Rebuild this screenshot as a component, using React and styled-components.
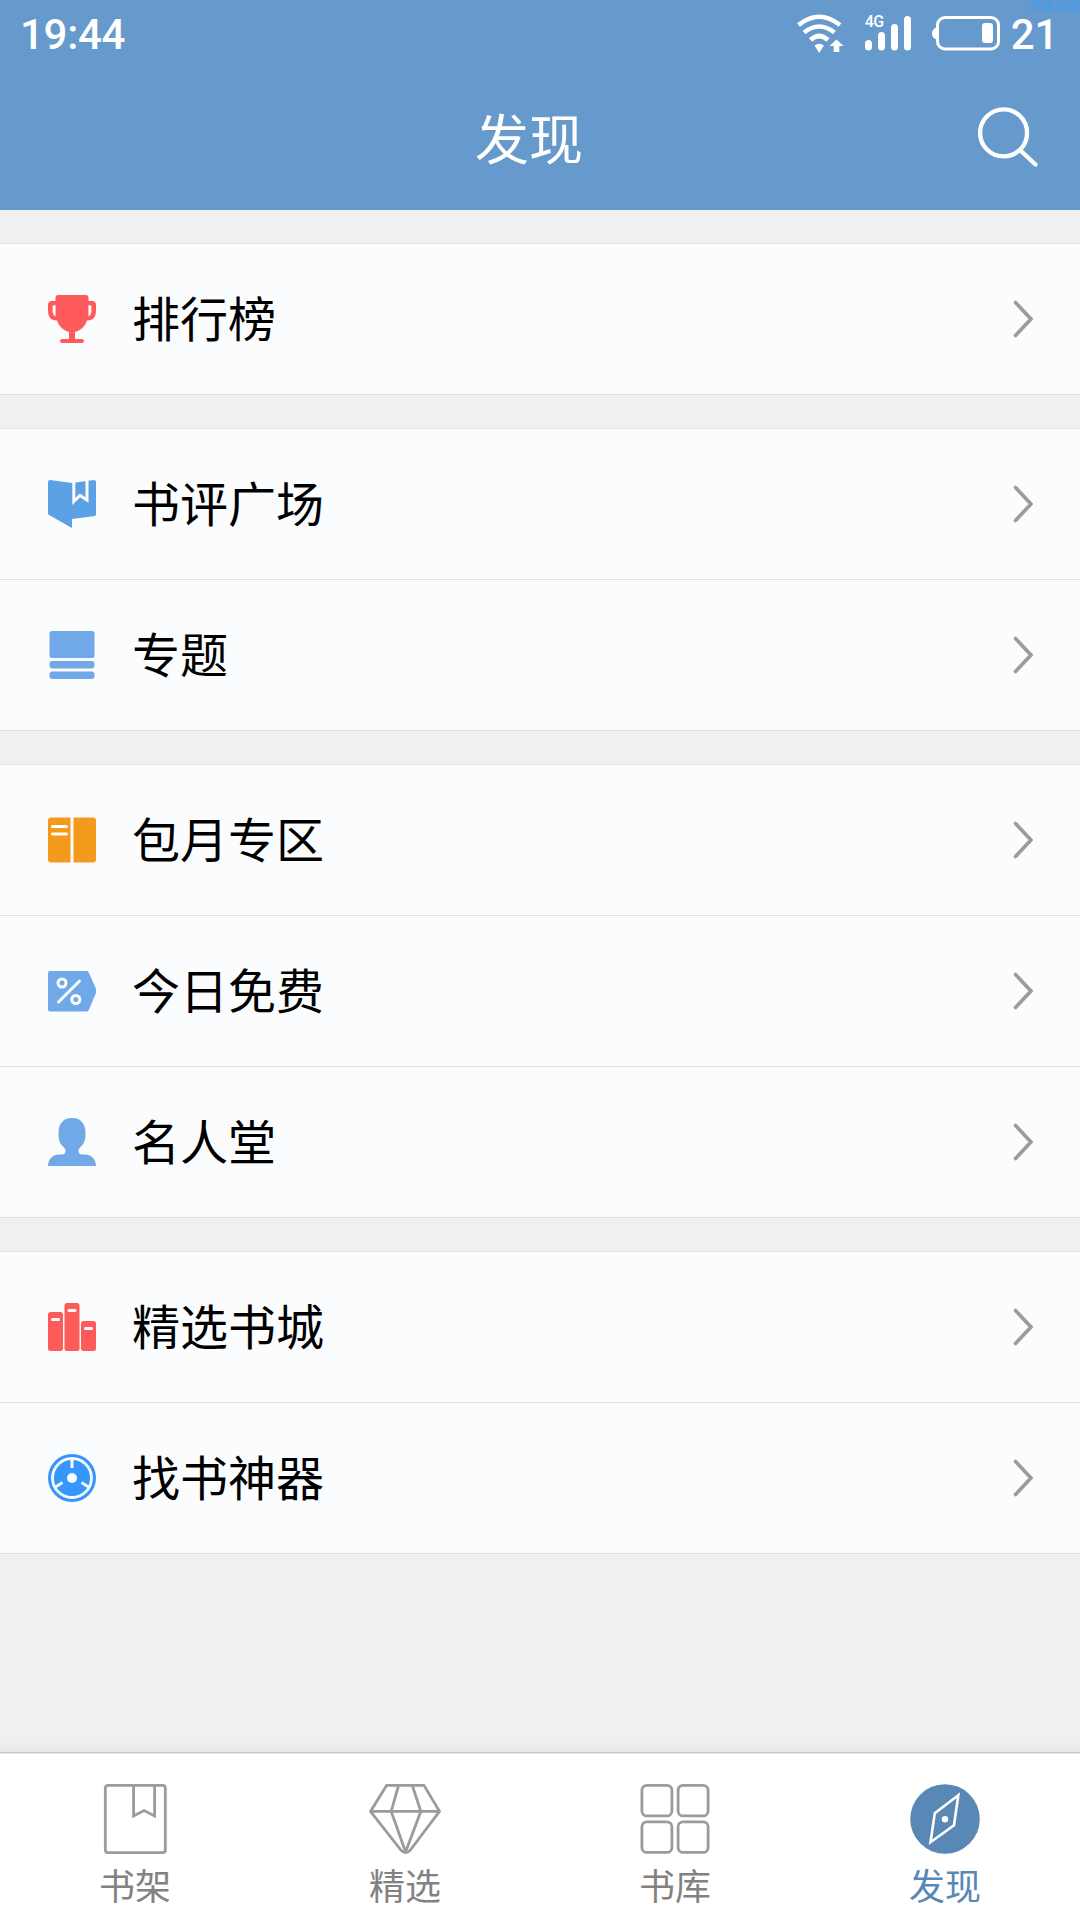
import styled, { createGlobalStyle } from 'styled-components';

const GlobalStyle = createGlobalStyle`
*{
box-sizing:border-box;
}
body{
margin:0;
background-color:#eff0f2;
font-family:Roboto, "Noto Sans CJK SC", sans-serif;
}
`;

const TrophyIcon = () => (
  <svg width='48' height='48' viewBox='0 0 48 48'>
    <path fill='#ff5a5a' d='M10 0h28q2.500 0 2.500 3v3H44q4 0 4 4v6q0 9-8 9.500h-1C37 31 33 35.500 27 37v7h7q2 0 2 2t-2 2H14q-2 0-2-2t2-2h7v-7C15 35.500 11 31 9 25.500H8q-8-.5-8-9.500v-6q0-4 4-4h3.500V3Q7.500 0 10 0z' />
    <path fill='#fbfcfe' d='M7.600 10v11.500Q4.600 20 4.600 16v-4.500q0-1.500 3-1.500zM40.400 10v11.500q3-1.500 3-5.500v-4.500q0-1.500-3-1.500z' />
  </svg>
);

const ReviewIcon = () => (
  <svg width='48' height='48' viewBox='0 0 48 48'>
    <path fill='#5ba1e4' d='M2 0l22 3 22-3q2 0 2 2v33l-1 1-23 3v9L1 35l-1-1V2Q0 0 2 0z' />
    <path fill='none' stroke='#fbfcfe' strokeWidth='3' d='M25.800 0v21.500l6.200-6 7 4.500V0' />
  </svg>
);

const TopicIcon = () => (
  <svg width='48' height='48' viewBox='0 0 48 48' fill='#70a8e8'>
    <rect x='1.500' y='0' width='45' height='27' rx='2.500' />
    <rect x='1.500' y='30' width='45' height='7.500' rx='3' />
    <rect x='1.500' y='40.500' width='45' height='7.500' rx='3' />
  </svg>
);

const MonthlyIcon = () => (
  <svg width='48' height='48' viewBox='0 0 48 48'>
    <path fill='#f39a1c' d='M3 1.500h19.500v45H3q-3 0-3-3v-39q0-3 3-3zM25.500 1.500H45q3 0 3 3v39q0 3-3 3H25.500z' />
    <path stroke='#fff' strokeWidth='3' strokeLinecap='round' d='M4.500 10.500h14M4.500 18h14' />
  </svg>
);

const FreeIcon = () => (
  <svg width='48' height='48' viewBox='0 0 48 48'>
    <path fill='#70a8e8' d='M2 4h37q1 0 2 2l7 16q.6 2 0 4l-7 16.500q-1 2-2 2H2q-2 0-2-2V6q0-2 2-2z' />
    <g fill='none' stroke='#fbfcfe' strokeWidth='3' strokeLinecap='round'>
      <circle cx='14' cy='16' r='4' />
      <circle cx='27.800' cy='32.500' r='4' />
      <path d='M31.500 14L10.500 35' />
    </g>
  </svg>
);

const PersonIcon = () => (
  <svg width='48' height='48' viewBox='0 0 48 48'>
    <path fill='#70a8e8' d='M24 0c9 0 13.500 6 13.500 15 0 6-1 10-4 13-2 2-3 3-3 5 0 3 2 3.500 6 3.500C43 36.500 48 41 48 48H0c0-7 5-11.500 11.500-11.500 4 0 6-.5 6-3.500 0-2-1-3-3-5-3-3-4-7-4-13C10.500 6 15 0 24 0z' />
  </svg>
);

const CityIcon = () => (
  <svg width='48' height='48' viewBox='0 0 48 48'>
    <g fill='#ff5a5a'>
      <rect x='0' y='9' width='15' height='39' rx='2.500' />
      <rect x='16.500' y='0' width='15' height='48' rx='2.500' />
      <rect x='33' y='18' width='15' height='30' rx='2.500' />
    </g>
    <path stroke='#fff' strokeWidth='3' strokeLinecap='round' d='M4.500 16.500h6M21 7.500h6M37.500 25.500h6' />
  </svg>
);

const FinderIcon = () => (
  <svg width='48' height='48' viewBox='0 0 48 48'>
    <circle cx='24' cy='24' r='24' fill='#3596fb' />
    <circle cx='24' cy='24' r='19.500' fill='none' stroke='#fbfcfe' strokeWidth='2.800' />
    <circle cx='24' cy='24' r='5' fill='#fbfcfe' />
    <path stroke='#fbfcfe' strokeWidth='3' d='M24 5v9M7.500 33l7-4.500M40.500 33l-7-4.500' />
  </svg>
);

const ShelfIcon = () => (
  <svg width='72' height='70' viewBox='0 0 72 70' fill='none' stroke='#9b9b9b' strokeWidth='2.800'>
    <rect x='6.300' y='1.400' width='60' height='67.200' rx='2.500' />
    <path d='M34.600 2v30l10.500-5.500 10.500 5.500V2' />
  </svg>
);

const DiamondIcon = () => (
  <svg width='72' height='70' viewBox='0 0 72 70' fill='none' stroke='#9b9b9b' strokeWidth='2.800' strokeLinejoin='round'>
    <path d='M17.500 1.400h37.500l15.500 26L41 66.500q-4.400 4-8.800 0L1.500 27.400z' />
    <path d='M1.500 27.400h69M29.400 2l-7.200 25.400L36.600 68l15.200-40.600L43.500 2' />
  </svg>
);

const LibraryIcon = () => (
  <svg width='72' height='70' viewBox='0 0 72 70' fill='none' stroke='#9b9b9b' strokeWidth='2.800'>
    <rect x='2.900' y='1.400' width='30' height='30.500' rx='5' />
    <rect x='39.100' y='1.400' width='30' height='30.500' rx='5' />
    <rect x='2.900' y='37.900' width='30' height='30.500' rx='5' />
    <rect x='39.100' y='37.900' width='30' height='30.500' rx='5' />
  </svg>
);

const CompassIcon = () => (
  <svg width='72' height='70' viewBox='0 0 72 70'>
    <circle cx='36' cy='35' r='34.800' fill='#5a88b6' />
    <path fill='none' stroke='#fff' strokeWidth='2.600' d='M49.300 11.300L25.800 29.200 21.500 58.200 45 41.200z' />
    <circle cx='36' cy='35.300' r='3.200' fill='#fff' />
  </svg>
);

const groups = [
  [
    { name: "排行榜", icon: <TrophyIcon /> },
  ],
  [
    { name: "书评广场", icon: <ReviewIcon /> },
    { name: "专题", icon: <TopicIcon /> },
  ],
  [
    { name: "包月专区", icon: <MonthlyIcon /> },
    { name: "今日免费", icon: <FreeIcon /> },
    { name: "名人堂", icon: <PersonIcon /> },
  ],
  [
    { name: "精选书城", icon: <CityIcon /> },
    { name: "找书神器", icon: <FinderIcon /> },
  ],
];

const tabs = [
  { name: "书架", icon: <ShelfIcon /> },
  { name: "精选", icon: <DiamondIcon /> },
  { name: "书库", icon: <LibraryIcon /> },
  { name: "发现", icon: <CompassIcon />, active: true },
];

function App() {
  return (
    <>
      <GlobalStyle />
      <Page>
        <Header>
          <CornerMark width='50' height='12' viewBox='0 0 50 12' fill='#3f9df0'>
            <rect width='50' height='12' opacity='0.25' />
            <path opacity='0.5' d='M2 1h9v4H2zM4 7h7v3H4zM14 3l4-3 4 4-4 7-4-4zM27 1h8v3h-8zM28 6h7v4h-7zM39 0h9v3h-9zM41 5h6v5h-6z' />
          </CornerMark>
          <StatusBar>
            <StatusText>19:44</StatusText>
            <StatusIcons>
              <svg width='48' height='40' viewBox='0 0 48 40'>
                <g fill='none' stroke='#fff' strokeWidth='4.600'>
                  <path d='M1.500 11Q22.200 -5.500 43 11' />
                  <path d='M7 18.500Q22.200 6.500 37.400 18.500' />
                  <path d='M13.500 26Q22.200 18 31 26' />
                </g>
                <path fill='#fff' d='M17.500 31.500q4.700-3.500 9.400 0l-4.700 7.500zM39.500 25.500l7 6.500h-4.200v6h-5.600v-6h-4.200z' />
              </svg>
              <SignalBox>
                <NetLabel>4G</NetLabel>
                <svg width='47' height='35' viewBox='0 0 47 35' fill='#fff'>
                  <rect x='0' y='24' width='7' height='10.500' rx='3.500' />
                  <rect x='13' y='16' width='7' height='18.500' rx='3.500' />
                  <rect x='26' y='8' width='7' height='26.500' rx='3.500' />
                  <rect x='39' y='0' width='7' height='34.500' rx='3.500' />
                </svg>
              </SignalBox>
              <svg width='68' height='35' viewBox='0 0 68 35'>
                <path fill='#fff' d='M5 11v13q-5-2-5-6.500t5-6.500z' />
                <rect x='5.500' y='1.500' width='61' height='31.500' rx='7.500' fill='none' stroke='#fff' strokeWidth='3' />
                <rect x='50' y='7' width='11' height='20' rx='3' fill='#fff' />
              </svg>
            </StatusIcons>
            <StatusText>21</StatusText>
          </StatusBar>
          <TitleBar>
            <Title>发现</Title>
            <SearchButton>
              <svg width='62' height='62' viewBox='0 0 62 62' fill='none' stroke='#fff' strokeLinecap='round'>
                <circle cx='25.600' cy='25.900' r='23.500' strokeWidth='4.400' />
                <path d='M43 44l14.500 13.500' strokeWidth='4.400' />
              </svg>
            </SearchButton>
          </TitleBar>
        </Header>
        <Content>
          {groups.map((rows) => (
            <Group key={rows[0].name}>
              {rows.map((v) => (
                <Row key={v.name}>
                  {v.icon}
                  <RowName>{v.name}</RowName>
                  <svg width='20' height='38' viewBox='0 0 20 38'>
                    <path fill='none' stroke='#9b9b9b' strokeWidth='3.600' strokeLinecap='round' d='M2.500 2.500L18 19 2.500 35.500' />
                  </svg>
                </Row>
              ))}
            </Group>
          ))}
        </Content>
        <TabShadow />
        <TabBar>
          {tabs.map((v) => (
            <Tab key={v.name} $active={v.active}>
              {v.icon}
              <span>{v.name}</span>
            </Tab>
          ))}
        </TabBar>
      </Page>
    </>)
} export default App;

const Page = styled.div`
width:1080px;
height:1920px;
display:flex;
flex-direction:column;
overflow:hidden;
background-color:#eff0f2;
`;

const Header = styled.header`
position:relative;
height:210px;
background-color:#6699cc;
color:white;
`;

const CornerMark = styled.svg`
position:absolute;
top:0;
right:0;
`;

const StatusBar = styled.div`
height:70px;
padding:0 22px 0 20px;
display:flex;
align-items:center;
`;

const StatusIcons = styled.div`
display:flex;
align-items:center;
margin:0 11px 3px auto;
svg{
display:block;
}
`;

const StatusText = styled.span`
font-size:42px;
font-weight:500;
line-height:68px;
letter-spacing:-0.3px;
`;

const SignalBox = styled.div`
position:relative;
margin:0 20px;
`;

const NetLabel = styled.span`
position:absolute;
top:-2px;
left:0;
font-size:16px;
line-height:16px;
font-weight:500;
letter-spacing:-0.8px;
`;

const TitleBar = styled.div`
height:140px;
padding:0 40px 0 80px;
display:flex;
align-items:center;
`;

const Title = styled.h1`
flex:1;
margin:0;
padding-top:3px;
font-size:54px;
font-weight:400;
line-height:80px;
text-align:center;
`;

const SearchButton = styled.button`
width:62px;
height:62px;
margin-bottom:4px;
padding:0;
border:none;
background:none;
cursor:pointer;
svg{
display:block;
}
`;

const Content = styled.main`
flex:1;
padding-top:33px;
display:flex;
flex-direction:column;
gap:33px;
`;

const Group = styled.section`
border-top:1px solid #dfe0e2;
background-color:#fbfcfe;
`;

const Row = styled.div`
height:151px;
padding:0 47px 0 48px;
display:flex;
align-items:center;
border-bottom:1px solid #dfe0e2;
`;

const RowName = styled.span`
flex:1;
margin-left:36px;
padding-top:4px;
font-size:48px;
line-height:70px;
color:black;
`;

const TabShadow = styled.div`
height:12px;
background:linear-gradient(#eff0f2, #e8e8e8);
`;

const TabBar = styled.nav`
height:168px;
padding-top:31px;
display:flex;
border-top:1px solid #c8c8c8;
box-shadow:inset 0 1px 0 #e6e6e6;
background-color:white;
`;

const Tab = styled.div`
flex:1;
display:flex;
flex-direction:column;
align-items:center;
font-size:36px;
line-height:52px;
color:${({$active})=>($active ? "#5a88b6" : "#828282")};
svg{
display:block;
flex-shrink:0;
}
span{
margin-top:8px;
}
`;
